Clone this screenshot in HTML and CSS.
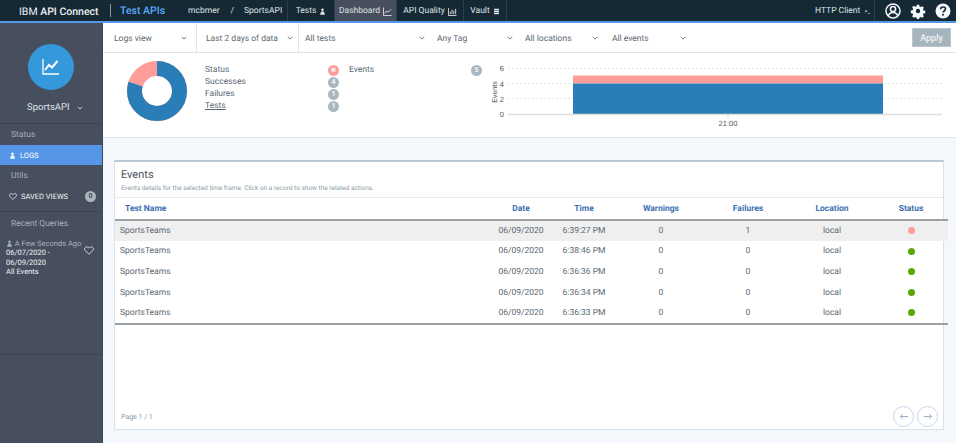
FILE: index.html
```html
<!DOCTYPE html>
<html lang="en">
<head>
<meta charset="utf-8">
<title>IBM API Connect - Test APIs</title>
<link rel="stylesheet" href="styles.css">
</head>
<body>
<header class="topbar">
  <div class="brand">IBM <b>API Connect</b></div>
  <div class="product">Test APIs</div>
  <div class="crumbs"><span>mcbmer</span><span class="slash">/</span><span>SportsAPI</span></div>
  <nav class="tabs">
    <a class="tab tab-tests">Tests <svg class="ico" viewBox="0 0 10 10"><circle cx="5" cy="2.6" r="1.8"/><path d="M1.5 9.5 3 5h4l1.500 4.500z"/></svg></a>
    <a class="tab tab-dash active">Dashboard <svg class="ico" viewBox="0 0 10 10"><path d="M.6.5v9h9M2 7l2.200-2.500 1.600 1.200L9 2.500" fill="none" stroke="currentColor" stroke-width="1"/></svg></a>
    <a class="tab tab-quality">API Quality <svg class="ico" viewBox="0 0 10 10"><path d="M.5 1v8.500h9M2.500 8V5M4.500 8V3M6.500 8V4M8.500 8V2" fill="none" stroke="currentColor" stroke-width="1"/></svg></a>
    <a class="tab tab-vault">Vault <svg class="ico" viewBox="0 0 10 10"><path d="M1.500 1h7v2.300h-7zM1.500 3.900h7v2.300h-7zM1.500 6.800h7V9h-7z"/></svg></a>
  </nav>
  <div class="top-right">
    <a class="http">HTTP Client <span class="prompt">&gt;_</span></a>
    <div class="top-icons">
      <svg class="big" viewBox="0 0 16 16"><circle cx="8" cy="8" r="7" fill="none" stroke="currentColor" stroke-width="1.500"/><circle cx="8" cy="6" r="2.600" fill="none" stroke="currentColor" stroke-width="1.500"/><path d="M3.200 13c1-2.800 2.800-3.500 4.800-3.500s3.800.7 4.800 3.500" fill="none" stroke="currentColor" stroke-width="1.500"/></svg>
      <svg class="big" viewBox="0 0 16 16"><path d="M6.700 1h2.600l.4 2 1.300.6 1.800-1.100 1.800 1.800-1.100 1.800.6 1.300 2 .4v2.600l-2 .4-.6 1.300 1.100 1.800-1.800 1.800-1.800-1.100-1.300.6-.4 2H6.700l-.4-2-1.300-.6-1.800 1.100-1.800-1.800 1.100-1.800-.6-1.300-2-.4V7.400l2-.4.6-1.300-1.100-1.800 1.800-1.800L5 3.200l1.300-.6z" transform="translate(.9 .9) scale(.89)"/><circle cx="8" cy="8" r="2.200" class="hole"/></svg>
      <svg class="big" viewBox="0 0 16 16"><circle cx="8" cy="8" r="7.500"/><path d="M5.600 6.200C5.700 4.600 6.800 4 8 4c1.400 0 2.500.8 2.500 2.100 0 1.800-2.400 1.900-2.400 3.500" fill="none" class="hole-line" stroke-width="1.700"/><circle cx="8" cy="11.800" r="1" class="hole"/></svg>
    </div>
  </div>
</header>

<div class="shell">
  <aside class="sidebar">
    <div class="api-block">
      <div class="avatar"><svg viewBox="0 0 18 18"><path d="M1 1v15h16" fill="none" stroke="#fff" stroke-width="1.300"/><path d="M3 12l4-5 3 2.500L15.500 3" fill="none" stroke="#fff" stroke-width="2"/></svg></div>
      <div class="api-name">SportsAPI <svg class="chev chev-light" viewBox="0 0 8 5"><path d="M1 1l3 3 3-3"/></svg></div>
    </div>
    <div class="side-section">
      <div class="side-label">Status</div>
      <a class="side-row selected"><svg class="ico" viewBox="0 0 10 10"><circle cx="5" cy="2.600" r="1.800"/><path d="M1.500 9.500 3 5h4l1.500 4.500z"/></svg> LOGS</a>
      <div class="side-label">Utils</div>
      <a class="side-row saved"><svg class="heart-sm" viewBox="0 0 16 14"><path d="M8 13 1.800 7C.2 5.300.6 2.800 2.500 1.700 4.500.7 6.700 1.300 8 3.200c1.300-1.900 3.500-2.500 5.500-1.500 1.900 1.100 2.300 3.600.7 5.300z"/></svg> SAVED VIEWS <span class="count">0</span></a>
    </div>
    <div class="side-section recent">
      <div class="side-label">Recent Queries</div>
      <div class="query">
        <div>
          <div class="ago"><svg class="ico" viewBox="0 0 10 10"><circle cx="5" cy="2.600" r="1.800"/><path d="M1.500 9.500 3 5h4l1.500 4.500z"/></svg> A Few Seconds Ago</div>
          <div>06/07/2020 -</div>
          <div>06/09/2020</div>
          <div>All Events</div>
        </div>
        <svg class="heart-lg" viewBox="0 0 16 14"><path d="M8 13 1.800 7C.2 5.300.6 2.800 2.500 1.700 4.500.7 6.700 1.300 8 3.200c1.300-1.900 3.500-2.500 5.500-1.500 1.900 1.100 2.300 3.600.7 5.300z"/></svg>
      </div>
    </div>
    <div class="side-rest"></div>
  </aside>

  <main class="main">
    <div class="filters">
      <div class="filter f1"><span>Logs view</span><svg class="chev" viewBox="0 0 8 5"><path d="M1 1l3 3 3-3"/></svg></div>
      <div class="filter f2"><span>Last 2 days of data</span><svg class="chev" viewBox="0 0 8 5"><path d="M1 1l3 3 3-3"/></svg></div>
      <div class="filter f3"><span>All tests</span><svg class="chev" viewBox="0 0 8 5"><path d="M1 1l3 3 3-3"/></svg></div>
      <div class="filter f4"><span>Any Tag</span><svg class="chev" viewBox="0 0 8 5"><path d="M1 1l3 3 3-3"/></svg></div>
      <div class="filter f5"><span>All locations</span><svg class="chev" viewBox="0 0 8 5"><path d="M1 1l3 3 3-3"/></svg></div>
      <div class="filter f6"><span>All events</span><svg class="chev" viewBox="0 0 8 5"><path d="M1 1l3 3 3-3"/></svg></div>
      <button class="apply">Apply</button>
    </div>

    <section class="summary">
      <svg class="donut" viewBox="0 0 60 60">
        <circle cx="30" cy="30" r="22.500" class="d-fail"/>
        <circle cx="30" cy="30" r="22.500" class="d-ok" pathLength="100" stroke-dasharray="80 20" transform="rotate(-90 30 30)"/>
      </svg>
      <div class="legend">
        <div class="leg-row"><span>Status</span><i class="pill pill-err">✖</i></div>
        <div class="leg-row"><span>Successes</span><i class="pill">4</i></div>
        <div class="leg-row"><span>Failures</span><i class="pill">1</i></div>
        <div class="leg-row"><a class="link">Tests</a><i class="pill">1</i></div>
      </div>
      <div class="legend legend2">
        <div class="leg-row"><span>Events</span><i class="pill">5</i></div>
      </div>
      <svg class="chart" viewBox="0 0 470 84">
        <g class="grid"><path d="M28 15.500H462M28 30.500H462M28 45.500H462"/></g>
        <rect x="93" y="22.500" width="310" height="8" class="bar-fail"/>
        <rect x="93" y="30.500" width="310" height="30.500" class="bar-ok"/>
        <path d="M28 61.500H462" class="axis"/>
        <path d="M248 62v4" class="tick"/>
        <text x="24" y="18" class="num">6</text>
        <text x="24" y="33.500" class="num">4</text>
        <text x="24" y="48.500" class="num">2</text>
        <text x="24" y="64" class="num">0</text>
        <text x="248" y="73" class="xlab">21:00</text>
        <text transform="translate(17 39) rotate(-90)" class="ylab">Events</text>
      </svg>
    </section>

    <section class="card-wrap">
      <div class="card">
        <div class="card-head">
          <h2>Events</h2>
          <p>Events details for the selected time frame. Click on a record to show the related actions.</p>
        </div>
        <table class="events">
          <colgroup><col class="c-name"><col class="c-date"><col class="c-time"><col class="c-warn"><col class="c-fail"><col class="c-loc"><col class="c-stat"></colgroup>
          <thead>
            <tr><th class="left">Test Name</th><th>Date</th><th>Time</th><th>Warnings</th><th>Failures</th><th>Location</th><th>Status</th></tr>
          </thead>
          <tbody>
            <tr class="hl"><td class="left">SportsTeams</td><td>06/09/2020</td><td>6:39:27 PM</td><td>0</td><td>1</td><td>local</td><td><i class="dot dot-err"></i></td></tr>
            <tr><td class="left">SportsTeams</td><td>06/09/2020</td><td>6:38:46 PM</td><td>0</td><td>0</td><td>local</td><td><i class="dot"></i></td></tr>
            <tr><td class="left">SportsTeams</td><td>06/09/2020</td><td>6:36:36 PM</td><td>0</td><td>0</td><td>local</td><td><i class="dot"></i></td></tr>
            <tr><td class="left">SportsTeams</td><td>06/09/2020</td><td>6:36:34 PM</td><td>0</td><td>0</td><td>local</td><td><i class="dot"></i></td></tr>
            <tr><td class="left">SportsTeams</td><td>06/09/2020</td><td>6:36:33 PM</td><td>0</td><td>0</td><td>local</td><td><i class="dot"></i></td></tr>
          </tbody>
        </table>
        <div class="card-foot">
          <span class="page">Page 1 / 1</span>
          <div class="pager">
            <button class="round"><svg viewBox="0 0 12 8"><path d="M11 4H2M4.500 1 1.500 4l3 3"/></svg></button>
            <button class="round"><svg viewBox="0 0 12 8"><path d="M1 4h9M7.500 1l3 3-3 3"/></svg></button>
          </div>
        </div>
      </div>
    </section>
  </main>
</div>
</body>
</html>
```

FILE: styles.css
```css
* { box-sizing: border-box; }
html, body { margin: 0; height: 100%; overflow: hidden; }
body {
  width: 956px;
  height: 443px;
  font-family: Roboto, "Noto Sans", sans-serif;
  text-rendering: geometricPrecision;
  color: #5a6872;
  background: #f4f7fb;
  display: flex;
  flex-direction: column;
}
svg { display: block; }
.ico { width: 7px; height: 7px; fill: currentColor; display: inline-block; }

/* top bar */
.topbar {
  height: 23px;
  flex: none;
  background: #152935;
  border-bottom: 2px solid #5596e6;
  color: #dfe3e6;
  display: flex;
  align-items: center;
  font-size: 8.500px;
  white-space: nowrap;
}
.brand {
  width: 110px;
  padding: 1px 0 0 19px;
  font-size: 10.500px;
  color: #eef1f3;
}
.brand b { font-weight: 500; }
.product {
  width: 68px;
  height: 13px;
  line-height: 14px;
  border-left: 1px solid #8d9aa3;
  padding-left: 9px;
  color: #5aaafa;
  font-size: 10.500px;
  font-weight: 500;
}
.crumbs { width: 109px; padding: 1px 0 0 10px; display: flex; }
.slash { margin: 0 10px 0 11px; }
.tabs { display: flex; height: 21px; }
.tab {
  display: flex;
  align-items: center;
  justify-content: center;
  gap: 3px;
  padding-top: 1px;
  border-left: 1px solid #2a3d49;
}
.tab-tests { width: 47px; }
.tab-dash { width: 62px; }
.tab-quality { width: 67px; }
.tab-vault { width: 44px; border-right: 1px solid #2a3d49; }
.tab.active { background: #474f5e; }
.tab-dash .ico, .tab-quality .ico { width: 9px; height: 9px; }
.top-right { margin-left: auto; display: flex; height: 21px; align-items: center; }
.http { width: 60px; height: 100%; line-height: 22px; border-right: 1px solid #2a3d49; }
.prompt { font-size: 6px; margin-left: 2px; }
.top-icons { display: flex; gap: 9px; width: 81px; padding-left: 10px; }
.big { width: 16px; height: 16px; fill: #f4f7fb; color: #f4f7fb; }
.hole { fill: #152935; }
.hole-line { stroke: #152935; }

/* shell */
.shell { flex: 1; display: flex; min-height: 0; }

/* sidebar */
.sidebar {
  width: 103px;
  flex: none;
  background: #474f5e;
  border-right: 1px solid #3f4756;
  color: #f0f2f4;
  font-size: 7.500px;
  display: flex;
  flex-direction: column;
}
.api-block { height: 101px; border-bottom: 1px solid #3a4453; padding-top: 21px; }
.avatar {
  width: 46px;
  height: 46px;
  margin-left: 28px;
  border-radius: 50%;
  background: #3498db;
  display: flex;
  align-items: center;
  justify-content: center;
}
.avatar svg { width: 18px; height: 18px; }
.api-name {
  margin-top: 11px;
  padding-left: 27px;
  font-size: 9.500px;
  color: #dfe3e6;
  display: flex;
  align-items: center;
  gap: 7px;
  line-height: 13px;
}
.side-section { height: 88px; border-bottom: 1px solid #3a4453; }
.side-label { height: 21px; padding-left: 11px; line-height: 22px; font-size: 8.500px; color: #a7b0b9; }
.side-row { height: 20px; display: flex; align-items: center; gap: 4px; padding-left: 9px; }
.side-row.selected { background: #5596e6; color: #fff; }
.saved { margin-top: 0; height: 21px; }
.heart-sm { width: 8px; height: 7px; fill: none; stroke: #f0f2f4; stroke-width: 1.500; }
.count {
  margin-left: auto;
  margin-right: 6px;
  width: 11px;
  height: 11px;
  border-radius: 50%;
  background: #aab5bd;
  color: #474f5e;
  font-size: 7px;
  font-weight: 700;
  line-height: 11px;
  text-align: center;
}
.recent { height: 143px; }
.recent .side-label { height: 24px; line-height: 24px; }
.query {
  margin-top: 3px;
  padding: 0 6px;
  display: flex;
  justify-content: space-between;
  align-items: flex-start;
  line-height: 9.300px;
  font-size: 7.500px;
  white-space: nowrap;
}
.ago { color: #a7b0b9; }
.ago .ico { display: inline; vertical-align: -1px; }
.heart-lg { width: 10px; height: 9px; margin-top: 7px; margin-right: 2px; fill: none; stroke: #f0f2f4; stroke-width: 1.300; }
.side-rest { flex: 1; }

/* main */
.main { flex: 1; min-width: 0; display: flex; flex-direction: column; }

.filters {
  height: 30px;
  flex: none;
  background: #fff;
  border-bottom: 1px solid #dfe6eb;
  display: flex;
  align-items: stretch;
  font-size: 8.500px;
  padding-right: 5px;
}
.filter { display: flex; align-items: center; justify-content: space-between; }
.filter span { padding-top: 2px; }
.chev { width: 6px; height: 4px; fill: none; stroke: #5a6872; stroke-width: 1.200; flex: none; }
.chev-light { stroke: #dfe3e6; }
.f1 { width: 94px; padding: 0 9px 0 11px; border-right: 1px solid #dfe6eb; }
.f2 { width: 102px; padding: 0 5px 0 9px; border-right: 1px solid #dfe6eb; }
.f3 { width: 132px; padding: 0 6px 0 6px; }
.f4 { width: 88px; padding: 0 6px 0 6px; }
.f5 { width: 87px; padding: 0 8px 0 6px; }
.f6 { width: 89px; padding: 0 9px 0 6px; }
.apply {
  margin: 5px 0 5px auto;
  width: 39px;
  border: 1px solid #b9c6cd;
  background: #a6b5bd;
  color: #eef2f4;
  font: 500 9px Roboto, sans-serif;
  padding: 0;
}

.summary {
  height: 85px;
  flex: none;
  background: #fff;
  border-bottom: 1px solid #dfe6eb;
  display: flex;
  align-items: flex-start;
  font-size: 8.500px;
}
.donut { width: 60px; height: 60px; margin: 8px 0 0 24px; flex: none; }
.donut circle { fill: none; stroke-width: 15; }
.d-fail { stroke: #ff9d98; }
.d-ok { stroke: #2a7eb8; }
.legend { margin: 11px 0 0 18px; width: 134px; flex: none; }
.legend2 { margin-left: 10px; width: 133px; }
.leg-row { height: 12px; display: flex; align-items: center; justify-content: space-between; padding-right: 0; }
.link { text-decoration: underline; }
.pill {
  width: 11px;
  height: 11px;
  border-radius: 50%;
  background: #a9b8c0;
  color: #f4f7f8;
  font: 700 7px/11px Roboto, sans-serif;
  text-align: center;
}
.pill-err { background: #ff9d98; font-size: 6px; }
.chart { width: 470px; height: 84px; flex: none; margin-left: -2px; }
.chart text { font-family: "Liberation Sans", sans-serif; font-size: 7.500px; fill: #555; }
.grid path { stroke: #e4e4e4; stroke-width: 1; stroke-dasharray: 2 2; fill: none; }
.bar-fail { fill: #ff9d98; }
.bar-ok { fill: #2a7eb8; }
.axis { stroke: #e0e0e0; stroke-width: 1.500; fill: none; }
.tick { stroke: #d8d8d8; fill: none; }
.chart .num { text-anchor: end; }
.chart .xlab { text-anchor: middle; }
.chart .ylab { text-anchor: middle; font-size: 7px; }

/* events card */
.card-wrap { flex: 1; padding: 22px 12px 13px 11px; min-height: 0; }
.card {
  height: 100%;
  background: #fff;
  border: 1px solid #d8e2e8;
  border-top: 2px solid #b8cad5;
  display: flex;
  flex-direction: column;
}
.card-head { height: 36px; padding: 6px 6px 0; border-bottom: 1px solid #e4eaee; flex: none; }
.card-head h2 { margin: 0; font-size: 11px; font-weight: 400; line-height: 13px; color: #4d5358; }
.card-head p { margin: 3px 0 0; font-size: 6.500px; line-height: 8px; color: #8c9ba5; }
.events {
  width: 833px;
  flex: none;
  margin-right: -3px;
  table-layout: fixed;
  border-collapse: collapse;
  font-size: 8.500px;
}
.c-name { width: 375px; } .c-date { width: 62px; } .c-time { width: 64px; }
.c-warn { width: 90px; } .c-fail { width: 84px; } .c-loc { width: 84px; } .c-stat { width: 74px; }
.events th {
  height: 22px;
  padding: 0;
  color: #3d70b2;
  font-weight: 700;
  font-size: 8.500px;
  text-align: center;
  border-bottom: 2px solid #9aa0a4;
}
.events th.left { text-align: left; padding-left: 10px; }
.events td { height: 20.750px; padding: 0; text-align: center; }
.events td.left { text-align: left; padding-left: 5px; }
.events tr.hl td { background: #efefef; }
.events tbody { border-bottom: 2px solid #9aa0a4; }
.dot { display: block; width: 7px; height: 7px; margin: 0 auto; border-radius: 50%; background: #5aa700; }
.dot-err { background: #ff9d98; }
.card-foot {
  flex: 1;
  display: flex;
  justify-content: space-between;
  align-items: flex-end;
  padding: 0 5px 2px 6px;
}
.page { font-size: 7px; color: #8c9ba5; padding-bottom: 6px; }
.pager { display: flex; gap: 3px; }
.round {
  width: 21px;
  height: 21px;
  padding: 0;
  border-radius: 50%;
  background: #fff;
  border: 1px solid #c5d6ea;
  display: flex;
  align-items: center;
  justify-content: center;
}
.round svg { width: 10px; height: 7px; fill: none; stroke: #9fb0c6; stroke-width: 1.200; }
```
